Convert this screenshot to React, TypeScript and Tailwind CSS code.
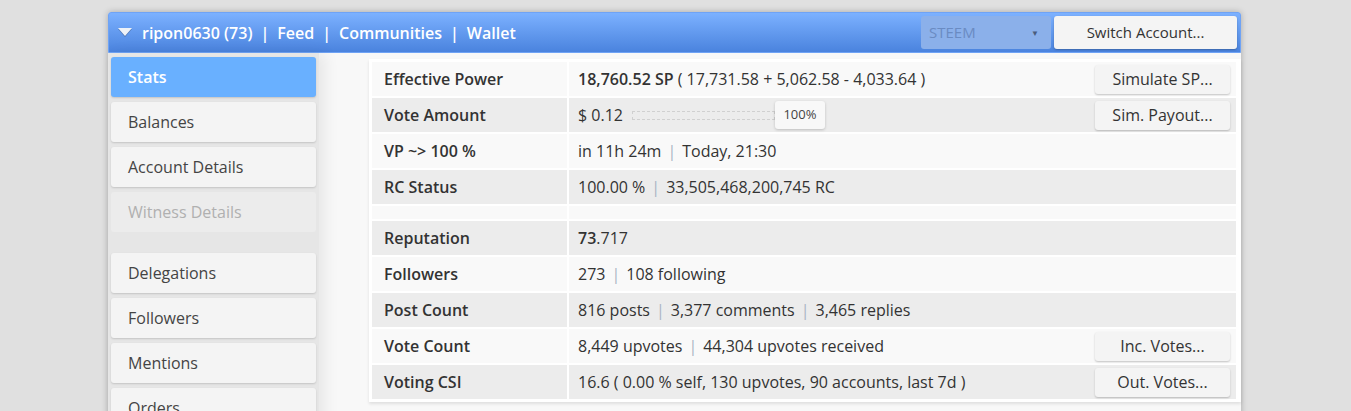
import React from "react";

const sideItems = [
  { label: "Stats", active: true },
  { label: "Balances" },
  { label: "Account Details" },
  { label: "Witness Details", disabled: true },
  { label: "", spacer: true },
  { label: "Delegations" },
  { label: "Followers" },
  { label: "Mentions" },
  { label: "Orders" },
];

function Sep() {
  return <span className="mx-[6px] text-[#a9b4c4]">|</span>;
}

function ActionButton({ children }: { children: React.ReactNode }) {
  return (
    <button className="h-[29px] w-[135px] rounded-[3px] bg-[#f4f4f4] text-[16px] text-[#333] shadow-[0_1px_2px_rgba(0,0,0,0.22)]">
      {children}
    </button>
  );
}

type Row = {
  label: string;
  value?: React.ReactNode;
  action?: string;
  spacer?: boolean;
};

const rows: Row[] = [
  {
    label: "Effective Power",
    value: (
      <>
        <span className="font-semibold">18,760.52 SP</span> ( 17,731.58 + 5,062.58 - 4,033.64 )
      </>
    ),
    action: "Simulate SP...",
  },
  {
    label: "Vote Amount",
    value: (
      <span className="flex items-center">
        <span>$ 0.12</span>
        <span className="ml-[9px] h-[9px] w-[143px] border border-dashed border-[#d0d0d0]" />
        <span className="flex h-[28px] w-[50px] items-center justify-center rounded-[3px] bg-[#f8f8f8] text-[13px] text-[#444] shadow-[0_1px_3px_rgba(0,0,0,0.2)]">
          100%
        </span>
      </span>
    ),
    action: "Sim. Payout...",
  },
  {
    label: "VP ~> 100 %",
    value: (
      <>
        in 11h 24m<Sep />Today, 21:30
      </>
    ),
  },
  {
    label: "RC Status",
    value: (
      <>
        100.00 %<Sep />33,505,468,200,745 RC
      </>
    ),
  },
  { label: "", spacer: true },
  {
    label: "Reputation",
    value: (
      <>
        <span className="font-semibold">73</span>.717
      </>
    ),
  },
  {
    label: "Followers",
    value: (
      <>
        273<Sep />108 following
      </>
    ),
  },
  {
    label: "Post Count",
    value: (
      <>
        816 posts<Sep />3,377 comments<Sep />3,465 replies
      </>
    ),
  },
  {
    label: "Vote Count",
    value: (
      <>
        8,449 upvotes<Sep />44,304 upvotes received
      </>
    ),
    action: "Inc. Votes...",
  },
  {
    label: "Voting CSI",
    value: <>16.6 ( 0.00 % self, 130 upvotes, 90 accounts, last 7d )</>,
    action: "Out. Votes...",
  },
];

export default function App() {
  return (
    <div className="h-[411px] overflow-hidden bg-[#e0e0e0] pt-[12px] font-['Open_Sans',sans-serif] text-[#333]">
      <div className="ml-[108px] w-[1133px] rounded-t-[3px] shadow-[0_0_6px_rgba(0,0,0,0.25)]">
        {/* header */}
        <div className="flex h-[41px] items-center justify-between rounded-t-[3px] border border-[#6fa3f5] bg-gradient-to-b from-[#7cb1ff] to-[#4a83de] pl-[9px] pr-[3px]">
          <div className="flex items-center text-[16px] font-semibold text-white">
            <svg width="14" height="9" viewBox="0 0 14 9" className="drop-shadow-[0_1px_0_rgba(0,0,0,0.25)]">
              <polygon points="0,0 14,0 7,8" fill="#eef2f8" />
            </svg>
            <span className="ml-[10px]">ripon0630 (73)</span>
            <span className="mx-[8px]">|</span>
            <span>Feed</span>
            <span className="mx-[8px]">|</span>
            <span>Communities</span>
            <span className="mx-[8px]">|</span>
            <span>Wallet</span>
          </div>
          <div className="flex items-center gap-[3px]">
            <div className="flex h-[33px] w-[130px] items-center justify-between rounded-[3px] bg-[#8bb0ea] pl-[8px] pr-[12px] text-[15px] text-[#6a8bc2]">
              <span>STEEM</span>
              <span className="text-[8px] text-[#4a5c7c]">▼</span>
            </div>
            <button className="h-[33px] w-[183px] rounded-[3px] bg-[#f4f4f4] text-[15px] text-[#333] shadow-[0_1px_2px_rgba(0,0,0,0.25)]">
              Switch Account...
            </button>
          </div>
        </div>

        {/* body */}
        <div className="flex">
          <div className="relative z-10 flex w-[211px] flex-col gap-[5px] bg-[#e6e6e6] pb-[10px] pl-[3px] pr-[3px] pt-[4px] shadow-[6px_0_14px_rgba(0,0,0,0.07)]">
            {sideItems.map((it, i) =>
              it.spacer ? (
                <div key={i} className="h-[11px]" />
              ) : (
                <div
                  key={i}
                  className={
                    it.active
                      ? "flex h-[40px] items-center rounded-[3px] bg-[#69b0ff] pl-[17px] text-[16px] font-semibold text-white shadow-[0_1px_2px_rgba(0,0,0,0.15)]"
                      : it.disabled
                      ? "flex h-[40px] items-center rounded-[3px] bg-[#ececec] pl-[17px] text-[16px] text-[#b0b0b0]"
                      : "flex h-[40px] items-center rounded-[3px] bg-[#f4f4f4] pl-[17px] text-[16px] text-[#444] shadow-[0_1px_2px_rgba(0,0,0,0.15)]"
                  }
                >
                  {it.label}
                </div>
              )
            )}
          </div>

          <div className="flex-1 bg-[#f8f8f8] pl-[50px] pt-[6px]">
            <div className="bg-white py-[1px] pl-[1px] pr-[3px] shadow-[0_2px_3px_rgba(0,0,0,0.1)]">
              <table className="w-full border-separate border-spacing-[2px] text-[16px]">
                <tbody>
                  {rows.map((r, i) => {
                    const bg = i % 2 === 0 ? "bg-[#f9f9f9]" : "bg-[#ececec]";
                    if (r.spacer) {
                      return (
                        <tr key={i}>
                          <td className={`h-[13px] ${bg}`} />
                          <td className={`h-[13px] ${bg}`} />
                        </tr>
                      );
                    }
                    return (
                      <tr key={i}>
                        <td className={`h-[34px] w-[195px] pl-[12px] font-semibold ${bg}`}>{r.label}</td>
                        <td className={`h-[34px] pl-[9px] pr-[6px] ${bg}`}>
                          <div className="flex items-center justify-between">
                            <div className="whitespace-nowrap">{r.value}</div>
                            {r.action && <ActionButton>{r.action}</ActionButton>}
                          </div>
                        </td>
                      </tr>
                    );
                  })}
                </tbody>
              </table>
            </div>
            <div className="h-[40px]" />
          </div>
        </div>
      </div>
    </div>
  );
}
